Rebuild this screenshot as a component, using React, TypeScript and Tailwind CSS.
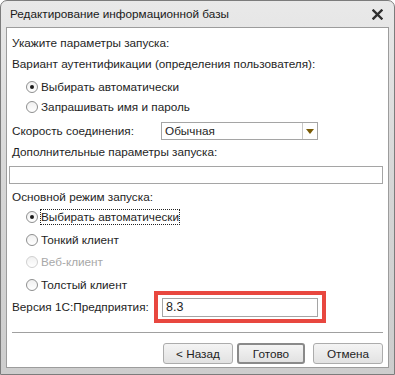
import React from 'react';

const font = { fontFamily: '"Liberation Sans", Arial, sans-serif' };

function Radio({ label, checked, disabled, focused }: { label: string; checked?: boolean; disabled?: boolean; focused?: boolean }) {
  return (
    <div className="flex items-center h-[20px] pl-[17px]">
      <span
        className={
          'flex items-center justify-center w-[12px] h-[12px] rounded-full border bg-gradient-to-b from-[#f0f0f0] to-white ' +
          (disabled ? 'border-[#d0d0d0]' : 'border-[#8e8f8f]')
        }
      >
        {checked && <span className="w-[4px] h-[4px] rounded-full bg-[#1a1a1a]" />}
      </span>
      <span
        className={
          'ml-[3px] leading-[14px] ' +
          (disabled ? 'text-[#a8a8a8]' : 'text-[#1e1e1e]') +
          (focused ? ' outline outline-1 outline-dotted outline-[#222]' : '')
        }
      >
        {label}
      </span>
    </div>
  );
}

function Btn({ label, primary }: { label: string; primary?: boolean }) {
  return (
    <div
      className={
        'flex items-center justify-center h-[21px] rounded-[3px] bg-gradient-to-b from-[#f4f4f4] to-[#e2e2e2] text-[#1e1e1e] ' +
        (primary ? 'w-[68px] border-2 border-[#8a8a8a]' : 'w-[70px] border border-[#acacac]')
      }
    >
      {label}
    </div>
  );
}

export default function App() {
  return (
    <div className="w-[395px] h-[375px] bg-white" style={font}>
      <div className="w-[395px] h-[375px] flex flex-col rounded-t-[7px] border border-[#7c7c7c] bg-gradient-to-b from-[#e9e9e9] via-[#d6d6d6] to-[#cdcdcd] text-[11.75px]">
        {/* title bar */}
        <div className="h-[26px] flex items-center justify-between pl-[9px] pr-[11px]">
          <span className="text-[#1a1a1a] text-[11.75px]">Редактирование информационной базы</span>
          <svg width="11" height="11" viewBox="0 0 11 11">
            <path d="M1.5 1.5 L9.5 9.5 M9.5 1.5 L1.5 9.5" stroke="#2e2e2e" strokeWidth="2.4" strokeLinecap="square" />
          </svg>
        </div>

        {/* client area */}
        <div className="flex-1 mx-[5px] mb-[6px] border border-[#9c9c9c] bg-white flex flex-col pl-[2px] pr-[5px] pt-[5px] text-[#1e1e1e]">
          <div className="h-[20px] flex items-center pl-[3px]">Укажите параметры запуска:</div>
          <div className="h-[20px] mt-[1px] flex items-center pl-[3px]">Вариант аутентификации (определения пользователя):</div>
          <div className="mt-[3px]">
            <Radio label="Выбирать автоматически" checked />
          </div>
          <Radio label="Запрашивать имя и пароль" />

          <div className="h-[20px] mt-[4px] flex items-center">
            <span className="w-[152px] pl-[3px]">Скорость соединения:</span>
            <div className="w-[157px] h-[18px] border border-[#a5a5a5] flex">
              <span className="flex-1 flex items-center pl-[3px]">Обычная</span>
              <span className="w-[15px] border-l border-[#c8c8c8] flex items-center justify-center">
                <svg width="8" height="5" viewBox="0 0 8 5">
                  <path d="M0 0 L8 0 L4 5 Z" fill="#7a5b06" />
                </svg>
              </span>
            </div>
          </div>

          <div className="h-[20px] mt-[1px] flex items-center pl-[3px]">Дополнительные параметры запуска:</div>
          <div className="h-[18px] mt-[4px] border border-[#a5a5a5]" />

          <div className="h-[20px] mt-[3px] flex items-center pl-[3px]">Основной режим запуска:</div>
          <Radio label="Выбирать автоматически" checked focused />
          <div className="mt-[3px]">
            <Radio label="Тонкий клиент" />
          </div>
          <div className="mt-[2px]">
            <Radio label="Веб-клиент" disabled />
          </div>
          <div className="mt-[3px]">
            <Radio label="Толстый клиент" />
          </div>

          <div className="h-[32px] -mt-[4px] flex items-center">
            <span className="w-[145px] pl-[3px]">Версия 1С:Предприятия:</span>
            <div className="w-[172px] h-[32px] border-4 border-[#e8473f] flex items-center justify-center">
              <div className="w-[156px] h-[19px] border border-[#a5a5a5] flex items-center pl-[3px] text-[12.5px]">8.3</div>
            </div>
          </div>

          <div className="mt-[9px] ml-[3px] h-[2px] border-t border-[#a0a0a0] border-b border-b-white" />

          <div className="mt-[9px] flex justify-end gap-[4px]">
            <Btn label="< Назад" />
            <Btn label="Готово" primary />
            <div className="ml-[4px]">
              <Btn label="Отмена" />
            </div>
          </div>
        </div>
      </div>
    </div>
  );
}
